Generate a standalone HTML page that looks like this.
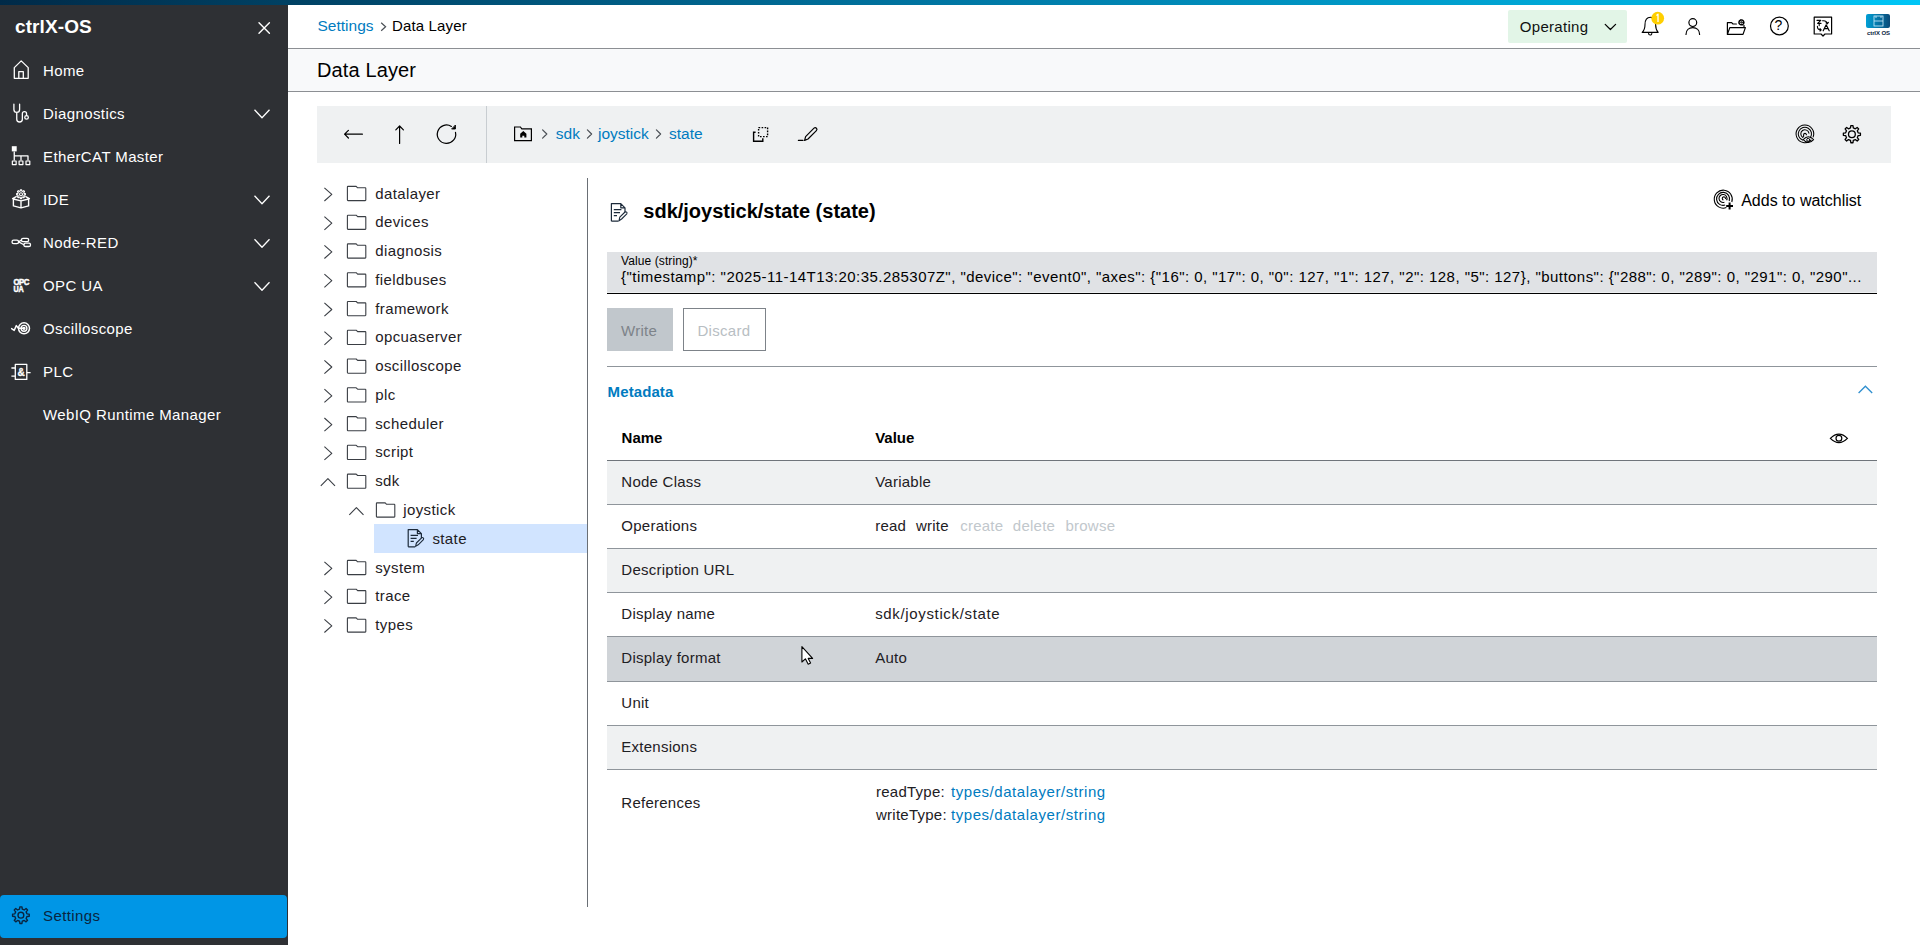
<!DOCTYPE html>
<html><head><meta charset="utf-8">
<style>
*{box-sizing:border-box;margin:0;padding:0}
html,body{width:1920px;height:945px;overflow:hidden;background:#fff;font-family:"Liberation Sans",sans-serif;color:#000;font-size:15px}
.abs{position:absolute}
#topbar{left:0;top:0;width:1920px;height:5px;background:linear-gradient(90deg,#002a48 0%,#0077a4 50%,#00c6f6 100%)}
#side{left:0;top:5px;width:288px;height:940px;background:#2e3034;color:#fff}
.logo{left:15px;top:11px;font-size:19px;font-weight:bold;letter-spacing:0.1px}
.st{font-size:15px;color:#fff;white-space:nowrap;line-height:17px;letter-spacing:0.4px}
.nav .t{position:absolute;left:43px;top:12px;font-size:15px;white-space:nowrap;letter-spacing:0.2px}
.nav svg.ic{position:absolute;left:11px;top:11px}
.nav svg.chev{position:absolute;left:253px;top:16px}
#settings{left:0;top:895px;width:287px;height:43px;background:#0096e6;border-radius:4px;color:#0b1f33}
#hdr{left:288px;top:5px;width:1632px;height:44px;background:#fff;border-bottom:1px solid #8c8f93}
#ttl{left:288px;top:49px;width:1632px;height:43px;background:#f8f9fa;border-bottom:1px solid #8c8f93}
.bc{left:317px;top:12px;font-size:15px;white-space:nowrap}
.link{color:#007bc0}
#tb{left:317px;top:106px;width:1574px;height:57px;background:#eff1f2}
#vsep{left:587px;top:178px;width:1px;height:729px;background:#6a6f75}
.tree{left:317px;width:270px;height:29px;white-space:nowrap}
.rt{font-size:15px;line-height:17px;color:#1e2024;white-space:nowrap;letter-spacing:0.25px}
.tt{font-size:15px;line-height:17px;color:#1e2024;white-space:nowrap;letter-spacing:0.4px}
</style></head><body>
<div id="topbar" class="abs"></div>
<div id="side" class="abs">
  <div class="logo abs">ctrlX-OS</div>
</div>
<div class="abs st" style="left:43px;top:61.7px">Home</div>
<div class="abs st" style="left:43px;top:104.7px">Diagnostics</div>
<div class="abs st" style="left:43px;top:147.7px">EtherCAT Master</div>
<div class="abs st" style="left:43px;top:190.7px">IDE</div>
<div class="abs st" style="left:43px;top:233.7px">Node-RED</div>
<div class="abs st" style="left:43px;top:276.7px">OPC UA</div>
<div class="abs st" style="left:43px;top:319.7px">Oscilloscope</div>
<div class="abs st" style="left:43px;top:362.7px">PLC</div>
<div class="abs st" style="left:43px;top:405.7px">WebIQ Runtime Manager</div>
<div id="settings" class="abs"></div>
<div class="abs st" style="left:43px;top:906.7px;color:#0a2540">Settings</div>
<svg class="abs" style="left:0;top:0" width="288" height="945" viewBox="0 0 288 945" fill="none" stroke="#fff" stroke-width="1.3" stroke-linecap="round" stroke-linejoin="round">
  <!-- close X -->
  <path d="M259 22.7 L269.4 33.2 M269.4 22.7 L259 33.2" stroke-width="1.4"/>
  <!-- home -->
  <path d="M14.3 78.3 V67.6 L21.2 60.9 L28.2 67.6 V78.3 Z M18.8 78.3 V71.6 H23.3 V78.3" stroke-linecap="butt"/>
  <!-- stethoscope -->
  <path d="M13.9 104.2 V109.6 A2.85 2.85 0 0 0 19.6 109.6 V104.2 M16.75 112.5 V119.2 A2.8 2.8 0 0 0 22.35 119.2 V113.8 A2.1 2.1 0 0 1 26.55 113.8 V115.6"/>
  <circle cx="26.55" cy="117.4" r="1.8"/>
  <!-- ethercat -->
  <rect x="11.8" y="146.2" width="4.9" height="5.2" fill="#fff" stroke="none"/>
  <path d="M14.25 151.4 V160.6 M14.25 155.9 H28 V160.6 M21 155.9 V160.6" stroke-linecap="butt"/>
  <rect x="12.35" y="161" width="3.8" height="3.6" stroke-width="1.2"/>
  <rect x="19.1" y="161" width="3.8" height="3.6" stroke-width="1.2"/>
  <rect x="26" y="161" width="3.8" height="3.6" stroke-width="1.2"/>
  <!-- IDE box + gear -->
  <path d="M13.4 199 L21 200.9 L28.6 199 V205.9 L21 207.9 L13.4 205.9 Z M21 200.9 V207.9 M12.6 198.6 L16.2 196.6 M29.4 198.6 L25.8 196.6" stroke-width="1.4"/>
  <path d="M20.24 190.99 L20.40 189.84 L21.60 189.84 L21.76 190.99 L22.74 191.39 L23.66 190.69 L24.51 191.54 L23.81 192.46 L24.21 193.44 L25.36 193.60 L25.36 194.80 L24.21 194.96 L23.81 195.94 L24.51 196.86 L23.66 197.71 L22.74 197.01 L21.76 197.41 L21.60 198.56 L20.40 198.56 L20.24 197.41 L19.26 197.01 L18.34 197.71 L17.49 196.86 L18.19 195.94 L17.79 194.96 L16.64 194.80 L16.64 193.60 L17.79 193.44 L18.19 192.46 L17.49 191.54 L18.34 190.69 L19.26 191.39 Z" stroke-width="1.2"/>
  <circle cx="21" cy="194.2" r="1.5" stroke-width="1.1"/>
  <!-- node-red -->
  <rect x="12" y="240.2" width="6.6" height="3.4" rx="1.7"/>
  <rect x="21.4" y="238.3" width="7.3" height="3.3" rx="1.6"/>
  <rect x="23.9" y="243.2" width="6.6" height="3.3" rx="1.6"/>
  <path d="M18.6 241.9 L21.4 240 M18.6 241.9 L23.9 244.8"/>
  <!-- oscilloscope -->
  <circle cx="24" cy="328.3" r="5.5" stroke-width="1.5"/>
  <circle cx="24" cy="328.3" r="2.9" stroke-width="1.4"/>
  <circle cx="24" cy="328.3" r="1" fill="#fff"/>
  <path d="M11.6 328.6 L14.2 330.4 L16.3 325.6 L18.4 328.3 H23" stroke-width="1.4"/>
  <!-- PLC -->
  <rect x="15.3" y="364.4" width="11.5" height="15" stroke-width="1.3"/>
  <path d="M11.4 368 H15.3 M11.4 376.2 H15.3 M26.8 372.6 H30.6" stroke-linecap="butt"/>
  <!-- chevrons -->
  <path d="M254.5 109.8 L262 117.8 L269.5 109.8 M254.5 195.8 L262 203.8 L269.5 195.8 M254.5 239.3 L262 247.3 L269.5 239.3 M254.5 282.3 L262 290.3 L269.5 282.3" stroke-width="1.3" stroke-linecap="butt"/>
  <!-- settings gear -->
  <g stroke="#0a2540" stroke-width="1.4">
  <path id="gear" d="M19.55 909.15 L19.85 906.87 L21.95 906.87 L22.25 909.15 L24.22 909.97 L26.05 908.56 L27.54 910.05 L26.13 911.88 L26.95 913.85 L29.23 914.15 L29.23 916.25 L26.95 916.55 L26.13 918.52 L27.54 920.35 L26.05 921.84 L24.22 920.43 L22.25 921.25 L21.95 923.53 L19.85 923.53 L19.55 921.25 L17.58 920.43 L15.75 921.84 L14.26 920.35 L15.67 918.52 L14.85 916.55 L12.57 916.25 L12.57 914.15 L14.85 913.85 L15.67 911.88 L14.26 910.05 L15.75 908.56 L17.58 909.97 Z"/>
  <circle cx="20.9" cy="915.2" r="2.9"/>
  </g>
</svg>
<svg class="abs" style="left:0;top:0" width="288" height="945">
  <text x="13.4" y="284.8" font-family="Liberation Sans" font-weight="bold" font-size="8.6" fill="#fff" letter-spacing="-0.5" textLength="15.6" lengthAdjust="spacingAndGlyphs" stroke="#fff" stroke-width="0.5">OPC</text>
  <text x="13.4" y="292.1" font-family="Liberation Sans" font-weight="bold" font-size="8.6" fill="#fff" textLength="10.4" lengthAdjust="spacingAndGlyphs" stroke="#fff" stroke-width="0.5">UA</text>
  <text x="21.1" y="376" font-family="Liberation Sans" font-weight="bold" font-size="10" fill="#fff" text-anchor="middle" stroke="#fff" stroke-width="0.3">&amp;</text>
</svg>
<div id="hdr" class="abs"></div>
<div class="abs bc" style="left:317.5px;top:16.6px;font-size:15.5px;line-height:17px;color:#007bc0">Settings</div>
<svg class="abs" style="left:378px;top:20px" width="12" height="14" fill="none" stroke="#4a4f55" stroke-width="1.2"><path d="M3.2 2.8 L7.6 6.8 L3.2 10.8"/></svg>
<div class="abs bc" style="left:392px;top:17px;font-size:15px;line-height:17px;color:#000;letter-spacing:0.15px">Data Layer</div>
<div class="abs" style="left:1508px;top:10px;width:119px;height:33px;background:#e2f5e7;border-radius:2px"></div>
<div class="abs bc" style="left:1519.8px;top:18px;font-size:15px;line-height:17px;color:#111;letter-spacing:0.3px">Operating</div>
<svg class="abs" style="left:0;top:0;overflow:visible" width="1" height="1" fill="none" stroke="#000" stroke-width="1.2" stroke-linecap="round" stroke-linejoin="round">
  <path d="M1605.2 24.3 L1610.4 29.5 L1615.6 24.3"/>
  <!-- bell -->
  <path d="M1642.2 32.4 C1644.6 30 1645 28 1645 24.5 C1645 20 1647 17.2 1650.5 17.2 C1654 17.2 1655.6 20 1655.6 24.5 C1655.6 28 1656 30 1658.2 32.4 Z" stroke-width="1.1"/>
  <path d="M1648.6 33.4 A1.6 1.6 0 0 0 1651.8 33.4" stroke-width="1.1"/>
  <circle cx="1657.7" cy="18.2" r="6.4" fill="#ffcf00" stroke="none"/>
  <path d="M1656.4 15.4 L1658 14.2 V22" stroke="#fff" stroke-width="1.3" stroke-linecap="butt"/>
  <!-- person -->
  <circle cx="1692.8" cy="22.6" r="3.9" stroke-width="1.2"/>
  <path d="M1686 34.4 C1686 30 1689 27.6 1692.8 27.6 C1696.6 27.6 1699.6 30 1699.6 34.4" stroke-width="1.2"/>
  <!-- folder with gear -->
  <path d="M1727.4 34.4 V22.6 H1731.6 L1733 24 H1736.4 M1727.4 34.4 L1729.8 27.6 H1745.4 L1743 34.4 Z M1744 27.6 V25.4" stroke-width="1.2"/>
  <circle cx="1741.4" cy="22.4" r="2.4" stroke-width="1.6" stroke-dasharray="1.1 0.8"/>
  <circle cx="1741.4" cy="22.4" r="0.8" stroke-width="0.9"/>
  <!-- help -->
  <circle cx="1779.4" cy="26" r="8.9" stroke-width="1.2"/>
  <!-- translate -->
  <path d="M1814.2 17.2 H1831.6 V34 H1825 L1823 36 L1821 34 H1814.2 Z" stroke-width="1.2"/>
</svg>
<div class="abs" style="left:1774.5px;top:17px;font-size:14px;line-height:17px;color:#000">?</div>
<svg class="abs" style="left:0;top:0;overflow:visible" width="1" height="1" fill="none" stroke="#000" stroke-width="1.1" stroke-linecap="round" stroke-linejoin="round">
<path d="M1817 20.4 H1820.8 L1817.6 23.4 H1821 M1819.2 23.4 V25.6"/>
<path d="M1822.6 20.8 Q1826.8 20.4 1827.4 23.8 M1826 22.8 L1827.4 23.8 L1828.4 22.4"/>
<path d="M1817.4 26.4 Q1817.4 29.8 1821.2 29.8 M1820 28.6 L1821.2 29.8 L1820 31"/>
<path d="M1823.2 30.8 L1826.2 24.8 L1829.2 30.8 M1824.3 28.6 H1828.1" stroke-width="1.2"/>
</svg>
<!-- ctrlX logo -->
<div class="abs" style="left:1865.6px;top:13.7px;width:24.4px;height:14.3px;border-radius:2px;background:linear-gradient(90deg,#00a0d6,#0a4a78)"></div>
<svg class="abs" style="left:1866px;top:13.7px" width="24" height="15" fill="none" stroke="#cfefff" stroke-width="0.8"><rect x="8" y="2" width="9" height="10"/><path d="M8 7 H17 M10 2 V4 M15 2 V4"/></svg>
<div class="abs" style="left:1867px;top:29.5px;font-size:6px;line-height:6px;color:#0a2540;font-weight:bold;letter-spacing:-0.1px">ctrlX OS</div>
<div id="ttl" class="abs"></div>
<div class="abs" style="left:317px;top:58.6px;font-size:20px;line-height:23px;color:#000;white-space:nowrap;letter-spacing:0.12px">Data Layer</div>
<div id="tb" class="abs"></div>
<div class="abs" style="left:486px;top:106px;width:1px;height:57px;background:#c8cdd1"></div>
<svg class="abs" style="left:0;top:0;overflow:visible" width="1" height="1" fill="none" stroke="#000" stroke-width="1.3" stroke-linecap="round" stroke-linejoin="round">
  <path d="M344.6 134.2 H362.4 M348.4 130.4 L344.6 134.2 L348.4 138" stroke-width="1.2"/>
  <path d="M399.6 126 V143.4 M395.8 129.8 L399.6 126 L403.4 129.8" stroke-width="1.2"/>
  <path d="M455.50 132.29 A9.2 9.2 0 1 1 451.38 126.40" stroke-width="1.2"/>
  <path d="M452 129 L455.4 129 L455.4 125.4 Z" fill="#000" stroke-width="0.9"/>
  <!-- home folder -->
  <path d="M514.6 140.6 V127 H520.4 L521.8 128.8 H531.4 V140.6 Z" stroke-width="1.2" stroke-linejoin="miter"/>
  <path d="M520.2 137.6 V133.8 L523.3 131 L526.4 133.8 V137.6 H524.3 V135.8 H522.3 V137.6 Z" fill="#000" stroke="none"/>
  <path d="M542.6 129.8 L546.8 134 L542.6 138.2 M587.4 129.8 L591.6 134 L587.4 138.2 M656.4 129.8 L660.6 134 L656.4 138.2" stroke="#4a4f55" stroke-width="1.2"/>
  <!-- copy -->
  <path d="M758.6 127.6 H767.6 V136.6 H758.6 Z" stroke-dasharray="1.6 1.4" stroke-width="1.4" stroke-linecap="butt"/>
  <path d="M755.6 132.2 H753.6 V141.2 H762.8 V138.2" stroke-width="1.4" stroke-linecap="butt" stroke-linejoin="miter"/>
  <!-- pencil -->
  <path d="M804.6 140.4 L805.6 136.6 L814 128.2 A1.6 1.6 0 0 1 816.4 130.6 L808 139 Z M798.4 140.4 H803" stroke-width="1.2"/>
  <!-- watch icon -->
  <path d="M1811.12 140.12 A8.8 8.8 0 1 1 1813.17 136.91" stroke-width="1.05"/>
  <path d="M1802.64 140.10 A6.6 6.6 0 1 1 1810.31 137.69" stroke-width="1.05"/>
  <path d="M1802.85 137.45 A4.1 4.1 0 1 1 1808.94 133.19" stroke-width="1.05"/>
  <path d="M1803.6 136.6 V134.8 A1.4 1.4 0 0 1 1806.4 134.8" stroke-width="1.05"/>
  <path d="M1803.2 139.6 Q1808.4 133.8 1813.6 139.6 Q1808.4 145.4 1803.2 139.6 Z" stroke-width="1.05"/>
  <circle cx="1808.2" cy="139.8" r="1.5" stroke-width="1"/>
  <!-- gear -->
  <path d="M1850.50 127.95 L1850.82 125.67 L1852.98 125.67 L1853.30 127.95 L1855.33 128.80 L1857.17 127.40 L1858.70 128.93 L1857.30 130.77 L1858.15 132.80 L1860.43 133.12 L1860.43 135.28 L1858.15 135.60 L1857.30 137.63 L1858.70 139.47 L1857.17 141.00 L1855.33 139.60 L1853.30 140.45 L1852.98 142.73 L1850.82 142.73 L1850.50 140.45 L1848.47 139.60 L1846.63 141.00 L1845.10 139.47 L1846.50 137.63 L1845.65 135.60 L1843.37 135.28 L1843.37 133.12 L1845.65 132.80 L1846.50 130.77 L1845.10 128.93 L1846.63 127.40 L1848.47 128.80 Z" stroke-width="1.3"/>
  <circle cx="1851.9" cy="134.2" r="3.4" stroke-width="1.3"/>
</svg>
<div class="abs link" style="left:555.8px;top:125.2px;font-size:15.5px;line-height:17px;white-space:nowrap">sdk</div>
<div class="abs link" style="left:598px;top:125.2px;font-size:15.5px;line-height:17px;white-space:nowrap">joystick</div>
<div class="abs link" style="left:669px;top:125.2px;font-size:15.5px;line-height:17px;white-space:nowrap">state</div>
<div id="vsep" class="abs"></div>
<div class="abs" style="left:374px;top:524px;width:213px;height:29px;background:#d1e4ff"></div>
<div class="abs tt" style="left:375.2px;top:184.50px">datalayer</div>
<div class="abs tt" style="left:375.2px;top:213.27px">devices</div>
<div class="abs tt" style="left:375.2px;top:242.04px">diagnosis</div>
<div class="abs tt" style="left:375.2px;top:270.81px">fieldbuses</div>
<div class="abs tt" style="left:375.2px;top:299.58px">framework</div>
<div class="abs tt" style="left:375.2px;top:328.35px">opcuaserver</div>
<div class="abs tt" style="left:375.2px;top:357.12px">oscilloscope</div>
<div class="abs tt" style="left:375.2px;top:385.89px">plc</div>
<div class="abs tt" style="left:375.2px;top:414.66px">scheduler</div>
<div class="abs tt" style="left:375.2px;top:443.43px">script</div>
<div class="abs tt" style="left:375.2px;top:472.20px">sdk</div>
<div class="abs tt" style="left:403.2px;top:500.97px">joystick</div>
<div class="abs tt" style="left:375.2px;top:558.51px">system</div>
<div class="abs tt" style="left:375.2px;top:587.28px">trace</div>
<div class="abs tt" style="left:375.2px;top:616.05px">types</div>
<div class="abs tt" style="left:432.4px;top:529.74px">state</div>
<svg class="abs" style="left:0;top:0;overflow:visible" width="1" height="1" fill="none" stroke="#3a3e44" stroke-width="1.1" stroke-linejoin="round">
<path d="M324.4 187.8 L331.8 194.4 L324.4 201.0"/>
<path d="M348.0 200.6 H365.2 Q365.8 200.6 365.8 200.0 V188.4 Q365.8 187.8 365.2 187.8 H357.6 L356.2 186.4 H348.0 Q347.4 186.4 347.4 187.0 V200.0 Q347.4 200.6 348.0 200.6 Z"/>
<path d="M324.4 216.6 L331.8 223.2 L324.4 229.8"/>
<path d="M348.0 229.4 H365.2 Q365.8 229.4 365.8 228.8 V217.2 Q365.8 216.6 365.2 216.6 H357.6 L356.2 215.2 H348.0 Q347.4 215.2 347.4 215.8 V228.8 Q347.4 229.4 348.0 229.4 Z"/>
<path d="M324.4 245.3 L331.8 251.9 L324.4 258.5"/>
<path d="M348.0 258.1 H365.2 Q365.8 258.1 365.8 257.5 V245.9 Q365.8 245.3 365.2 245.3 H357.6 L356.2 243.9 H348.0 Q347.4 243.9 347.4 244.5 V257.5 Q347.4 258.1 348.0 258.1 Z"/>
<path d="M324.4 274.1 L331.8 280.7 L324.4 287.3"/>
<path d="M348.0 286.9 H365.2 Q365.8 286.9 365.8 286.3 V274.7 Q365.8 274.1 365.2 274.1 H357.6 L356.2 272.7 H348.0 Q347.4 272.7 347.4 273.3 V286.3 Q347.4 286.9 348.0 286.9 Z"/>
<path d="M324.4 302.9 L331.8 309.5 L324.4 316.1"/>
<path d="M348.0 315.7 H365.2 Q365.8 315.7 365.8 315.1 V303.5 Q365.8 302.9 365.2 302.9 H357.6 L356.2 301.5 H348.0 Q347.4 301.5 347.4 302.1 V315.1 Q347.4 315.7 348.0 315.7 Z"/>
<path d="M324.4 331.6 L331.8 338.2 L324.4 344.9"/>
<path d="M348.0 344.5 H365.2 Q365.8 344.5 365.8 343.9 V332.2 Q365.8 331.6 365.2 331.6 H357.6 L356.2 330.2 H348.0 Q347.4 330.2 347.4 330.9 V343.9 Q347.4 344.5 348.0 344.5 Z"/>
<path d="M324.4 360.4 L331.8 367.0 L324.4 373.6"/>
<path d="M348.0 373.2 H365.2 Q365.8 373.2 365.8 372.6 V361.0 Q365.8 360.4 365.2 360.4 H357.6 L356.2 359.0 H348.0 Q347.4 359.0 347.4 359.6 V372.6 Q347.4 373.2 348.0 373.2 Z"/>
<path d="M324.4 389.2 L331.8 395.8 L324.4 402.4"/>
<path d="M348.0 402.0 H365.2 Q365.8 402.0 365.8 401.4 V389.8 Q365.8 389.2 365.2 389.2 H357.6 L356.2 387.8 H348.0 Q347.4 387.8 347.4 388.4 V401.4 Q347.4 402.0 348.0 402.0 Z"/>
<path d="M324.4 418.0 L331.8 424.6 L324.4 431.2"/>
<path d="M348.0 430.8 H365.2 Q365.8 430.8 365.8 430.2 V418.6 Q365.8 418.0 365.2 418.0 H357.6 L356.2 416.6 H348.0 Q347.4 416.6 347.4 417.2 V430.2 Q347.4 430.8 348.0 430.8 Z"/>
<path d="M324.4 446.7 L331.8 453.3 L324.4 459.9"/>
<path d="M348.0 459.5 H365.2 Q365.8 459.5 365.8 458.9 V447.3 Q365.8 446.7 365.2 446.7 H357.6 L356.2 445.3 H348.0 Q347.4 445.3 347.4 445.9 V458.9 Q347.4 459.5 348.0 459.5 Z"/>
<path d="M320.8 485.8 L327.9 478.6 L335.0 485.8"/>
<path d="M348.0 488.3 H365.2 Q365.8 488.3 365.8 487.7 V476.1 Q365.8 475.5 365.2 475.5 H357.6 L356.2 474.1 H348.0 Q347.4 474.1 347.4 474.7 V487.7 Q347.4 488.3 348.0 488.3 Z"/>
<path d="M349.3 514.8 L356.4 507.6 L363.5 514.8"/>
<path d="M377.0 517.1 H394.2 Q394.8 517.1 394.8 516.5 V504.9 Q394.8 504.3 394.2 504.3 H386.6 L385.2 502.9 H377.0 Q376.4 502.9 376.4 503.5 V516.5 Q376.4 517.1 377.0 517.1 Z"/>
<path d="M324.4 561.8 L331.8 568.4 L324.4 575.0"/>
<path d="M348.0 574.6 H365.2 Q365.8 574.6 365.8 574.0 V562.4 Q365.8 561.8 365.2 561.8 H357.6 L356.2 560.4 H348.0 Q347.4 560.4 347.4 561.0 V574.0 Q347.4 574.6 348.0 574.6 Z"/>
<path d="M324.4 590.6 L331.8 597.2 L324.4 603.8"/>
<path d="M348.0 603.4 H365.2 Q365.8 603.4 365.8 602.8 V591.2 Q365.8 590.6 365.2 590.6 H357.6 L356.2 589.2 H348.0 Q347.4 589.2 347.4 589.8 V602.8 Q347.4 603.4 348.0 603.4 Z"/>
<path d="M324.4 619.3 L331.8 625.9 L324.4 632.5"/>
<path d="M348.0 632.1 H365.2 Q365.8 632.1 365.8 631.5 V619.9 Q365.8 619.3 365.2 619.3 H357.6 L356.2 617.9 H348.0 Q347.4 617.9 347.4 618.5 V631.5 Q347.4 632.1 348.0 632.1 Z"/>
<path d="M408.2 546.8 V529.6 H417.4 L421.4 533.6 V538.2 M408.2 546.8 H415.2 M417.4 529.6 V533.6 H421.4" stroke="#1c2a3a" stroke-width="1.2"/>
<path d="M410.6 535.4 H418 M410.6 538.4 H416.6 M410.6 541.4 H413.8" stroke="#1c2a3a" stroke-width="1.1"/>
<path d="M415.6 546.4 L416.4 543 L421.6 537.8 A1.3 1.3 0 0 1 423.4 539.6 L418.2 544.8 Z" stroke="#1c2a3a" stroke-width="1.1"/>
</svg>
<svg class="abs" style="left:0;top:0;overflow:visible" width="1" height="1" fill="none" stroke="#1c2a3a" stroke-width="1.2" stroke-linejoin="round">
<path d="M611.4 221.2 V203.6 H620.8 L625 207.8 V212.4 M611.4 221.2 H618.6 M620.8 203.6 V207.8 H625"/>
<path d="M613.8 209.6 H621.4 M613.8 212.6 H620 M613.8 215.6 H617"/>
<path d="M619 220.8 L619.8 217.2 L625 212 A1.3 1.3 0 0 1 626.8 213.8 L621.6 219 Z" stroke-width="1.1"/>
</svg>
<div class="abs" style="left:643.3px;top:200.4px;font-size:20px;line-height:23px;font-weight:bold;white-space:nowrap;color:#000">sdk/joystick/state (state)</div>
<svg class="abs" style="left:0;top:0;overflow:visible" width="1" height="1" fill="none" stroke="#000" stroke-width="1.1">
<path d="M1731.8 202 A9 9 0 1 0 1726.4 207.6"/>
<path d="M1729.2 201 A6.5 6.5 0 1 0 1725.2 205"/>
<path d="M1726.6 200.2 A4 4 0 1 0 1724.4 202.2"/>
<path d="M1725.4 199 A1.6 1.6 0 1 0 1723.4 200"/>
<path d="M1729.6 202.6 V209.4 M1726.2 206 H1733" stroke-width="2"/>
</svg>
<div class="abs" style="left:1741.2px;top:192.2px;font-size:16px;line-height:18px;white-space:nowrap;color:#000">Adds to watchlist</div>
<div class="abs" style="left:607px;top:252px;width:1270px;height:42px;background:#e0e2e5;border-bottom:1px solid #000;box-shadow:inset 0 -1px 0 #eceef0"></div>
<div class="abs" style="left:621px;top:254px;font-size:12px;line-height:14px;white-space:nowrap;color:#000;letter-spacing:0.1px">Value (string)*</div>
<div class="abs" style="left:621px;top:268.4px;font-size:15px;line-height:17px;white-space:nowrap;color:#000;letter-spacing:0.46px">{"timestamp": "2025-11-14T13:20:35.285307Z", "device": "event0", "axes": {"16": 0, "17": 0, "0": 127, "1": 127, "2": 128, "5": 127}, "buttons": {"288": 0, "289": 0, "291": 0, "290"...</div>
<div class="abs" style="left:607px;top:308px;width:66px;height:43px;background:#c1c7cc"></div>
<div class="abs" style="left:621px;top:321.5px;font-size:15px;line-height:17px;white-space:nowrap;color:#7d8389;letter-spacing:0.3px">Write</div>
<div class="abs" style="left:683px;top:308px;width:83px;height:43px;background:#fff;border:1px solid #7d8389"></div>
<div class="abs" style="left:697.4px;top:321.5px;font-size:15px;line-height:17px;white-space:nowrap;color:#b8bec3;letter-spacing:0.3px">Discard</div>
<div class="abs" style="left:607px;top:366px;width:1270px;height:1px;background:#8f959b"></div>
<div class="abs link" style="left:607.6px;top:382.5px;font-size:15px;line-height:17px;font-weight:bold;white-space:nowrap;letter-spacing:0.1px">Metadata</div>
<svg class="abs" style="left:0;top:0;overflow:visible" width="1" height="1" fill="none" stroke="#2f8fcf" stroke-width="1.3">
<path d="M1858.6 393 L1865.4 386.2 L1872.2 393"/>
</svg>
<div class="abs" style="left:621.6px;top:429.3px;font-size:15px;line-height:17px;font-weight:bold;white-space:nowrap;color:#000">Name</div>
<div class="abs" style="left:875.2px;top:429.3px;font-size:15px;line-height:17px;font-weight:bold;white-space:nowrap;color:#000">Value</div>
<svg class="abs" style="left:0;top:0;overflow:visible" width="1" height="1" fill="none" stroke="#000" stroke-width="1.2">
<path d="M1830.4 438.4 Q1838.9 430 1847.4 438.4 Q1838.9 446.8 1830.4 438.4 Z"/>
<circle cx="1838.9" cy="438.3" r="2.9"/>
</svg>
<div class="abs" style="left:607px;top:460px;width:1270px;height:1px;background:#6f757b"></div>
<div class="abs" style="left:607px;top:461px;width:1270px;height:43px;background:#eff1f2"></div>
<div class="abs" style="left:607px;top:504px;width:1270px;height:1px;background:#8f959b"></div>
<div class="abs rt" style="left:621.3px;top:472.7px">Node Class</div>
<div class="abs rt" style="left:875.2px;top:472.7px">Variable</div>
<div class="abs" style="left:607px;top:505px;width:1270px;height:43px;background:#fff"></div>
<div class="abs" style="left:607px;top:548px;width:1270px;height:1px;background:#8f959b"></div>
<div class="abs rt" style="left:621.3px;top:516.7px">Operations</div>
<div class="abs rt" style="left:875.2px;top:516.7px">read</div>
<div class="abs rt" style="left:915.9px;top:516.7px">write</div>
<div class="abs rt" style="left:960.2px;top:516.7px;color:#c1c7cc">create</div>
<div class="abs rt" style="left:1012.8px;top:516.7px;color:#c1c7cc">delete</div>
<div class="abs rt" style="left:1065.4px;top:516.7px;color:#c1c7cc">browse</div>
<div class="abs" style="left:607px;top:549px;width:1270px;height:43px;background:#eff1f2"></div>
<div class="abs" style="left:607px;top:592px;width:1270px;height:1px;background:#8f959b"></div>
<div class="abs rt" style="left:621.3px;top:560.7px">Description URL</div>
<div class="abs" style="left:607px;top:593px;width:1270px;height:43px;background:#fff"></div>
<div class="abs" style="left:607px;top:636px;width:1270px;height:1px;background:#8f959b"></div>
<div class="abs rt" style="left:621.3px;top:604.7px">Display name</div>
<div class="abs rt" style="left:875.2px;top:604.7px;letter-spacing:0.65px">sdk/joystick/state</div>
<div class="abs" style="left:607px;top:637px;width:1270px;height:44px;background:#d0d4d8"></div>
<div class="abs" style="left:607px;top:681px;width:1270px;height:1px;background:#8f959b"></div>
<div class="abs rt" style="left:621.3px;top:649.2px">Display format</div>
<div class="abs rt" style="left:875.2px;top:649.2px">Auto</div>
<div class="abs" style="left:607px;top:682px;width:1270px;height:43px;background:#fff"></div>
<div class="abs" style="left:607px;top:725px;width:1270px;height:1px;background:#8f959b"></div>
<div class="abs rt" style="left:621.3px;top:693.7px">Unit</div>
<div class="abs" style="left:607px;top:726px;width:1270px;height:43px;background:#eff1f2"></div>
<div class="abs" style="left:607px;top:769px;width:1270px;height:1px;background:#8f959b"></div>
<div class="abs rt" style="left:621.3px;top:737.7px">Extensions</div>
<div class="abs rt" style="left:621.3px;top:793.5px">References</div>
<div class="abs rt" style="left:876px;top:783.3px">readType:</div>
<div class="abs rt" style="left:951px;top:783.3px;color:#007bc0;letter-spacing:0.55px">types/datalayer/string</div>
<div class="abs rt" style="left:876px;top:805.7px">writeType:</div>
<div class="abs rt" style="left:951px;top:805.7px;color:#007bc0;letter-spacing:0.55px">types/datalayer/string</div>
<svg class="abs" style="left:0;top:0;overflow:visible" width="1" height="1"><path d="M801.9 646.6 V662 L805.4 658.8 L808.2 664.2 L810.6 663 L808.2 658.4 H812.6 Z" fill="#fff" stroke="#000" stroke-width="1.1" stroke-linejoin="round"/></svg>
</body></html>
